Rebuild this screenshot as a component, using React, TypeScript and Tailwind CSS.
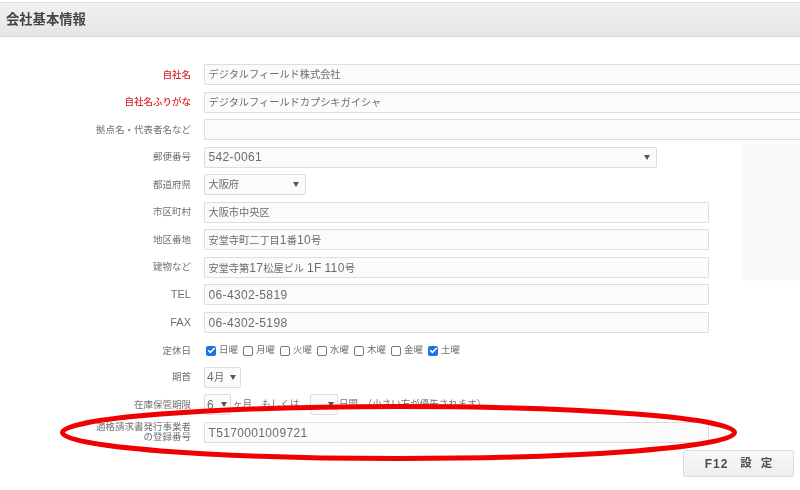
import { Check } from "lucide-react";

const cjk = "font-['Liberation_Sans','Noto_Sans_CJK_JP',sans-serif]";

// latin runs sit larger than the kana/kanji around them
const Mixed = ({ text }: { text?: string }) => (
  <>
    {(text ?? "").split(/([A-Za-z0-9-]+)/).map((part, i) =>
      i % 2 === 1 ? (
        <span key={i} className="text-[12px] tracking-[0.35px]">
          {part}
        </span>
      ) : (
        part
      )
    )}
  </>
);

const Label = ({ children, red }: { children: React.ReactNode; red?: boolean }) => (
  <div className={`w-[191px] shrink-0 text-right text-[9.5px] leading-[10px] ${red ? "font-medium text-[#d8262c]" : "text-[#707070]"}`}>
    {children}
  </div>
);

const Input = ({ value, w }: { value?: string; w: string }) => (
  <div className={`${w} h-[21px] shrink-0 rounded-[1px] border border-[#dedede] bg-[#fbfbfb] pl-[3.5px] text-[10.2px] leading-[20px] text-[#6c6c6c]`}>
    <Mixed text={value} />
  </div>
);

const Select = ({ value, w, arrow = "pr-[6px]", pl = "pl-[3.5px]" }: { value?: string; w: string; arrow?: string; pl?: string }) => (
  <div className={`${w} ${arrow} ${pl} flex h-[21px] shrink-0 items-center justify-between rounded-[2px] border border-[#dcdcdc] bg-[#fbfbfb] text-[10.2px] text-[#6c6c6c]`}>
    <span>
      <Mixed text={value} />
    </span>
    <span className="h-0 w-0 border-x-[3.5px] border-t-[5px] border-x-transparent border-t-[#555]" />
  </div>
);

const days = [
  { name: "日曜", on: true },
  { name: "月曜" },
  { name: "火曜" },
  { name: "水曜" },
  { name: "木曜" },
  { name: "金曜" },
  { name: "土曜", on: true },
];

const rows = [
  { label: "市区町村", value: "大阪市中央区" },
  { label: "地区番地", value: "安堂寺町二丁目1番10号" },
  { label: "建物など", value: "安堂寺第17松屋ビル 1F 110号" },
];

export default function App() {
  return (
    <div className={`relative h-[490px] w-[800px] overflow-hidden bg-white blur-[0.5px] ${cjk}`}>
      <div className="mt-[2px] h-[35px] border-y border-[#dedede] bg-gradient-to-b from-[#f1f1f1] to-[#e5e5e5] pl-[6px] text-[13.3px] font-bold leading-[33px] text-[#444]">
        会社基本情報
      </div>

      {/* faint panel on the right */}
      <div className="absolute right-0 top-[144px] h-[137px] w-[57px] bg-[#fafafa]" />

      <div className="mt-[27px] flex flex-col gap-y-[6.5px]">
        <div className="flex items-center gap-[13px]">
          <Label red>自社名</Label>
          <Input w="w-[610px]" value="デジタルフィールド株式会社" />
        </div>
        <div className="flex items-center gap-[13px]">
          <Label red>自社名ふりがな</Label>
          <Input w="w-[610px]" value="デジタルフィールドカプシキガイシャ" />
        </div>
        <div className="flex items-center gap-[13px]">
          <Label>拠点名・代表者名など</Label>
          <Input w="w-[610px]" />
        </div>
        <div className="flex items-center gap-[13px]">
          <Label>郵便番号</Label>
          <Select w="w-[453px]" value="542-0061" />
        </div>
        <div className="flex items-center gap-[13px]">
          <Label>都道府県</Label>
          <Select w="w-[102px]" value="大阪府" />
        </div>
        {rows.map((r) => (
          <div key={r.label} className="flex items-center gap-[13px]">
            <Label>{r.label}</Label>
            <Input w="w-[505px]" value={r.value} />
          </div>
        ))}
        <div className="flex items-center gap-[13px]">
          <Label><span className="text-[11px]">TEL</span></Label>
          <Input w="w-[505px]" value="06-4302-5819" />
        </div>
        <div className="flex items-center gap-[13px]">
          <Label><span className="text-[11px]">FAX</span></Label>
          <Input w="w-[505px]" value="06-4302-5198" />
        </div>

        <div className="flex h-[21px] items-center gap-[15px] pt-[2px]">
          <Label>定休日</Label>
          <div className="flex items-center gap-[5px] text-[9.5px] text-[#707070]">
            {days.map((d) => (
              <label key={d.name} className="flex w-[32px] items-center gap-[3px]">
                {d.on ? (
                  <span className="flex h-[10px] w-[10px] items-center justify-center rounded-[2px] bg-[#1a73e8]">
                    <Check size={9} strokeWidth={4} color="#fff" />
                  </span>
                ) : (
                  <span className="h-[10px] w-[10px] rounded-[2px] border border-[#777] bg-white" />
                )}
                {d.name}
              </label>
            ))}
          </div>
        </div>

        <div className="flex items-center gap-[13px]">
          <Label>期首</Label>
          <Select w="w-[37px]" value="4月" arrow="pr-[4px]" pl="pl-[2px]" />
        </div>

        <div className="flex items-center gap-[13px] text-[9.5px] text-[#707070]">
          <Label>在庫保管期限</Label>
          <div className="flex items-center">
            <Select w="w-[27px]" value="6" arrow="pr-[3px]" pl="pl-[2px]" />
            <span className="w-[79px] pl-[2px]">ヶ月　もしくは</span>
            <Select w="w-[28px]" arrow="pr-[3px]" />
            <span className="pl-[1px]">日間　（小さい方が優先されます）</span>
          </div>
        </div>

        <div className="flex items-center gap-[13px]">
          <Label>適格請求書発行事業者<br />の登録番号</Label>
          <Input w="w-[505px]" value="T5170001009721" />
        </div>
      </div>

      <div className="absolute left-[683px] top-[450px] flex h-[27px] w-[111px] items-center justify-center gap-[12px] rounded-[2px] border border-[#dcdcdc] bg-gradient-to-b from-[#f8f8f8] to-[#eeeeee] text-[11.5px] font-bold text-[#4c4c4c]">
        <span className="text-[12px] tracking-[1px]">F12</span>
        <span>設</span>
        <span className="-ml-[3px]">定</span>
      </div>

      {/* red annotation ring */}
      <svg className="absolute left-0 top-0" width="800" height="490" viewBox="0 0 800 490" fill="none">
        <ellipse cx="398.5" cy="432.5" rx="336" ry="26" stroke="#f00000" strokeWidth="5" />
      </svg>
    </div>
  );
}
